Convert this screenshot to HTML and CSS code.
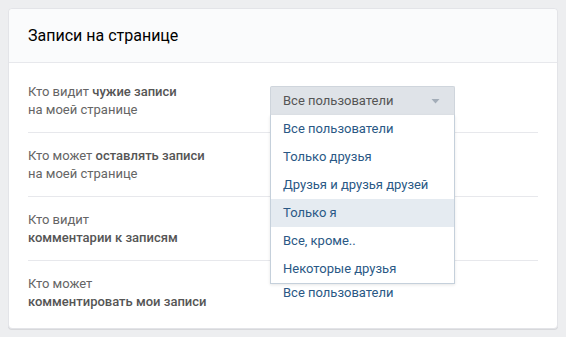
FILE: index.html
```html
<!DOCTYPE html>
<html lang="ru">
<head>
    <meta charset="UTF-8">
    <meta name="viewport" content="width=device-width, initial-scale=1.0">
    <title>Записи на странице</title>
    <link rel="stylesheet" href="styles.css">
</head>
<body>
    <div class="card">
        <div class="card-header">Записи на странице</div>
        <div class="settings">
            <div class="row">
                <div class="label">Кто видит <b>чужие записи</b><br>на моей странице</div>
                <div class="value">
                    <div class="select">
                        <div class="select-head">
                            <span>Все пользователи</span>
                            <svg class="arrow" width="9" height="5" viewBox="0 0 9 5"><path d="M0.5 0h8L4.5 4.5z" fill="#a3adb8"/></svg>
                        </div>
                        <ul class="menu">
                            <li>Все пользователи</li>
                            <li>Только друзья</li>
                            <li>Друзья и друзья друзей</li>
                            <li class="active">Только я</li>
                            <li>Все, кроме..</li>
                            <li>Некоторые друзья</li>
                        </ul>
                    </div>
                </div>
            </div>
            <!-- values of the next two rows are covered by the open menu -->
            <div class="row">
                <div class="label">Кто может <b>оставлять записи</b><br>на моей странице</div>
                <div class="value"></div>
            </div>
            <div class="row">
                <div class="label">Кто видит<br><b>комментарии к записям</b></div>
                <div class="value"></div>
            </div>
            <div class="row">
                <div class="label">Кто может<br><b>комментировать мои записи</b></div>
                <div class="value"><a href="#">Все пользователи</a></div>
            </div>
        </div>
    </div>
</body>
</html>
```

FILE: styles.css
```css
body {
    margin: 0;
    padding: 8px;
    background-color: #edeef0;
    font-family: Roboto, 'Open Sans', sans-serif;
    font-size: 13px;
    line-height: 18px;
}
.card {
    width: 548px;
    background-color: #fff;
    border: 1px solid #e3e4e8;
    border-radius: 4px;
    box-shadow: 0 1px 0 0 #d7d8db;
}
.card-header {
    height: 53px;
    padding: 0 19px;
    display: flex;
    align-items: center;
    background-color: #fafbfc;
    border-bottom: 1px solid #e7e8ec;
    border-radius: 4px 4px 0 0;
    font-size: 16px;
    color: #000;
}
.settings {
    padding: 6px 19px 4px;
}
.row {
    display: flex;
    align-items: center;
    padding: 14px 0 13px;
    border-bottom: 1px solid #e7e8ec;
}
.row:last-child {
    border-bottom: none;
}
.label {
    width: 255px;
    color: #656565;
}
.label b {
    font-weight: 500;
    color: #555;
}
.value {
    position: relative;
    flex: 1;
}
.value a {
    color: #2a5885;
    text-decoration: none;
}
.select {
    margin-left: -13px;
    width: 185px;
    position: relative;
    z-index: 2;
}
.select-head {
    height: 28px;
    padding: 0 12px;
    display: flex;
    align-items: center;
    justify-content: space-between;
    background-color: #dfe3e8;
    border: 1px solid #cfd5dc;
    border-bottom-color: #c5cdd6;
    border-radius: 2px 2px 0 0;
    color: #555;
}
.arrow {
    margin-right: 2px;
}
.menu {
    position: absolute;
    top: 29px;
    left: 0;
    right: 0;
    margin: 0;
    padding: 0;
    list-style: none;
    background-color: #fff;
    border: 1px solid #c5d0db;
    border-top: none;
    box-shadow: 0 1px 3px rgba(0, 0, 0, 0.1);
}
.menu li {
    height: 28px;
    padding: 0 12px;
    display: flex;
    align-items: center;
    color: #2a5885;
}
.menu li.active {
    background-color: #e5ebf1;
}
```
